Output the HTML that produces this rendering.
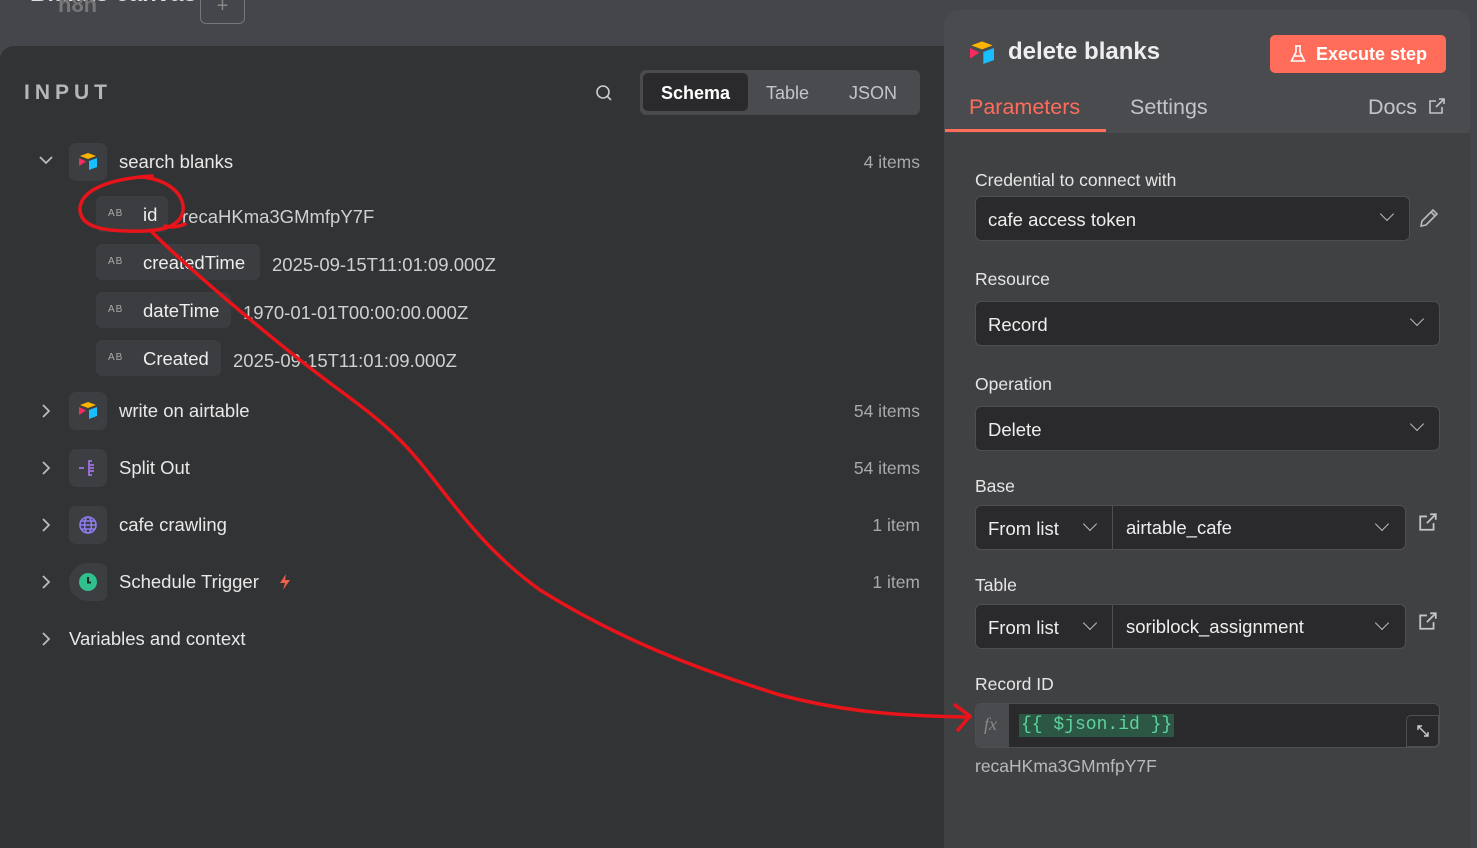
<!DOCTYPE html>
<html><head><meta charset="utf-8"><style>
*{box-sizing:border-box;margin:0;padding:0}
html,body{width:1477px;height:848px;overflow:hidden}
body{background:#45464c;font-family:"Liberation Sans",sans-serif;position:relative;color:#e6e6e6}
.a{position:absolute}
#left{left:0;top:46px;width:960px;height:802px;background:#323335;border-radius:14px 0 0 0}
#right{left:944px;top:10px;width:526px;height:838px;background:#404143;border-radius:14px 14px 0 0}
.ibox{position:absolute;width:38px;height:38px;border-radius:7px;background:#3d3e41}
.chev{position:absolute}
.name{position:absolute;font-size:18.5px;color:#e8e8e8}
.cnt{position:absolute;font-size:17.5px;color:#a8a9ad;text-align:right}
.pill{position:absolute;height:36px;border-radius:6px;background:#3c3d40;font-size:18.5px;color:#eee;padding:8px 10px 0 47px}
.pill i{position:absolute;left:12px;top:12px;font-size:10px;font-style:normal;color:#aaa;letter-spacing:1px}
.val{position:absolute;font-size:18.5px;color:#cfd0d2}
.lbl{position:absolute;left:975px;font-size:17.5px;color:#e6e6e6}
.inp{position:absolute;background:#2a2a2c;border:1px solid #4e4f52;border-radius:6px;height:45px;font-size:18.5px;color:#eee;padding:12px 12px}
.dd{position:absolute;width:10px;height:10px;border-right:1.5px solid #bbb;border-bottom:1.5px solid #bbb;transform:rotate(45deg)}
</style></head><body>
<div class="a" style="left:30px;top:-20px;font-size:24px;font-weight:bold;color:#ddd">Blanks canvas</div>
<div class="a" style="left:58px;top:-8px;font-size:22px;font-weight:bold;color:#777">n8n</div>
<div class="a" style="left:200px;top:-6px;width:45px;height:30px;border:1px solid #777;border-radius:6px;color:#888;text-align:center;font-size:20px">+</div>
<div id="left" class="a"></div>
<div class="a" style="left:24px;top:81px;font-size:21px;font-weight:bold;letter-spacing:5px;color:#b5b6ba">INPUT</div>
<svg class="a" style="left:595px;top:84px" width="18" height="18" viewBox="0 0 18 18"><circle cx="8" cy="8" r="6" fill="none" stroke="#ccc" stroke-width="1.6"/><path d="M12.5 12.5L16 16" stroke="#ccc" stroke-width="1.6"/></svg>
<div class="a" style="left:640px;top:70px;width:280px;height:45px;background:#4a4b4e;border-radius:6px"></div>
<div class="a" style="left:643px;top:73px;width:105px;height:38px;background:#2a2a2c;border-radius:5px;font-size:18px;font-weight:bold;color:#fff;text-align:center;padding-top:10px">Schema</div>
<div class="a" style="left:766px;top:83px;font-size:18px;color:#c4c5c9">Table</div>
<div class="a" style="left:849px;top:83px;font-size:18px;color:#c4c5c9">JSON</div>

<svg class="chev" style="left:38px;top:155px" width="16" height="10" viewBox="0 0 16 10"><path d="M2 2L8 8L14 2" stroke="#bbb" stroke-width="1.8" fill="none"/></svg>
<div class="ibox" style="left:69px;top:143px"></div>
<svg class="a" style="left:78px;top:152px" width="20" height="18" viewBox="0 0 20 18"><path d="M10 1L18 4L10 7L2 4Z" fill="#fcb400"/><path d="M11 9L19 6V15L11 18Z" fill="#18bfff"/><path d="M1 6L8 9.5L1 14Z" fill="#f82b60"/></svg>
<div class="name" style="left:119px;top:151px">search blanks</div>
<div class="cnt" style="top:152px;left:800px;width:120px">4 items</div>

<div class="pill" style="left:96px;top:196px;width:72px">id<i>AB</i></div>
<div class="val" style="left:182px;top:206px">recaHKma3GMmfpY7F</div>
<div class="pill" style="left:96px;top:244px;width:164px">createdTime<i>AB</i></div>
<div class="val" style="left:272px;top:254px">2025-09-15T11:01:09.000Z</div>
<div class="pill" style="left:96px;top:292px;width:135px">dateTime<i>AB</i></div>
<div class="val" style="left:243px;top:302px">1970-01-01T00:00:00.000Z</div>
<div class="pill" style="left:96px;top:340px;width:125px">Created<i>AB</i></div>
<div class="val" style="left:233px;top:350px">2025-09-15T11:01:09.000Z</div>

<svg class="chev" style="left:41px;top:403px" width="10" height="16" viewBox="0 0 10 16"><path d="M2 2L8 8L2 14" stroke="#bbb" stroke-width="1.8" fill="none"/></svg>
<div class="ibox" style="left:69px;top:392px"></div>
<svg class="a" style="left:78px;top:401px" width="20" height="18" viewBox="0 0 20 18"><path d="M10 1L18 4L10 7L2 4Z" fill="#fcb400"/><path d="M11 9L19 6V15L11 18Z" fill="#18bfff"/><path d="M1 6L8 9.5L1 14Z" fill="#f82b60"/></svg>
<div class="name" style="left:119px;top:400px">write on airtable</div>
<div class="cnt" style="top:401px;left:800px;width:120px">54 items</div>

<svg class="chev" style="left:41px;top:460px" width="10" height="16" viewBox="0 0 10 16"><path d="M2 2L8 8L2 14" stroke="#bbb" stroke-width="1.8" fill="none"/></svg>
<div class="ibox" style="left:69px;top:449px"></div>
<svg class="a" style="left:78px;top:458px" width="20" height="20" viewBox="0 0 20 20"><path d="M1 10H6M14 3H11V17H14M11 7H16M11 10H16M11 13H16" stroke="#a070e0" stroke-width="1.8" fill="none"/></svg>
<div class="name" style="left:119px;top:457px">Split Out</div>
<div class="cnt" style="top:458px;left:800px;width:120px">54 items</div>

<svg class="chev" style="left:41px;top:517px" width="10" height="16" viewBox="0 0 10 16"><path d="M2 2L8 8L2 14" stroke="#bbb" stroke-width="1.8" fill="none"/></svg>
<div class="ibox" style="left:69px;top:506px"></div>
<svg class="a" style="left:78px;top:515px" width="20" height="20" viewBox="0 0 20 20"><g fill="none" stroke="#8c7cf0" stroke-width="1.6"><circle cx="10" cy="10" r="8"/><ellipse cx="10" cy="10" rx="3.5" ry="8"/><path d="M2 10H18M3.5 6H16.5M3.5 14H16.5"/></g></svg>
<div class="name" style="left:119px;top:514px">cafe crawling</div>
<div class="cnt" style="top:515px;left:800px;width:120px">1 item</div>

<svg class="chev" style="left:41px;top:574px" width="10" height="16" viewBox="0 0 10 16"><path d="M2 2L8 8L2 14" stroke="#bbb" stroke-width="1.8" fill="none"/></svg>
<div class="ibox" style="left:69px;top:563px;border-radius:19px 7px 7px 19px"></div>
<svg class="a" style="left:78px;top:572px" width="20" height="20" viewBox="0 0 20 20"><circle cx="10" cy="10" r="9" fill="#2fc08e"/><path d="M10 5V10.5H13" stroke="#1d2a25" stroke-width="2" fill="none"/></svg>
<div class="name" style="left:119px;top:571px">Schedule Trigger</div>
<svg class="a" style="left:278px;top:573px" width="14" height="18" viewBox="0 0 14 18"><path d="M8 1L2 10H7L5 17L12 7H7Z" fill="#f0604a"/></svg>
<div class="cnt" style="top:572px;left:800px;width:120px">1 item</div>

<svg class="chev" style="left:41px;top:631px" width="10" height="16" viewBox="0 0 10 16"><path d="M2 2L8 8L2 14" stroke="#bbb" stroke-width="1.8" fill="none"/></svg>
<div class="name" style="left:69px;top:628px">Variables and context</div>

<div id="right" class="a"></div>
<div class="a" style="left:944px;top:10px;width:526px;height:123px;background:#4a4b4e;border-radius:14px 14px 0 0"></div>
<svg class="a" style="left:968px;top:40px" width="28" height="24" viewBox="0 0 20 18"><path d="M10 1L18 4L10 7L2 4Z" fill="#fcb400"/><path d="M11 9L19 6V15L11 18Z" fill="#18bfff"/><path d="M1 6L8 9.5L1 14Z" fill="#f82b60"/></svg>
<div class="a" style="left:1008px;top:38px;font-size:24px;font-weight:bold;color:#eee">delete blanks</div>
<div class="a" style="left:1270px;top:35px;width:176px;height:38px;background:#ff6d5a;border-radius:5px;color:#fff;font-size:18px;font-weight:bold;padding:9px 0 0 46px">Execute step</div>
<svg class="a" style="left:1290px;top:45px" width="16" height="18" viewBox="0 0 16 18"><path d="M5 1H11M6 1V7L1.5 16H14.5L10 7V1M4 11H12" stroke="#fff" stroke-width="1.6" fill="none"/></svg>
<div class="a" style="left:969px;top:95px;font-size:21.5px;color:#ff6d5a">Parameters</div>
<div class="a" style="left:945px;top:129px;width:161px;height:3px;background:#ff6d5a"></div>
<div class="a" style="left:1130px;top:95px;font-size:21.5px;color:#c4c5c9">Settings</div>
<div class="a" style="left:1368px;top:95px;font-size:21.5px;color:#c4c5c9">Docs</div>
<svg class="a" style="left:1428px;top:97px" width="18" height="18" viewBox="0 0 18 18"><path d="M14 10V16H2V4H8M11 2H16V7M16 2L8 10" stroke="#c4c5c9" stroke-width="1.6" fill="none"/></svg>

<div class="lbl" style="top:170px">Credential to connect with</div>
<div class="inp" style="left:975px;top:196px;width:435px">cafe access token</div>
<div class="dd" style="left:1382px;top:209px"></div>
<svg class="a" style="left:1418px;top:207px" width="22" height="22" viewBox="0 0 22 22"><path d="M3 19L4 14L15 3L19 7L8 18Z M13 5L17 9" stroke="#bbb" stroke-width="1.6" fill="none"/></svg>

<div class="lbl" style="top:269px">Resource</div>
<div class="inp" style="left:975px;top:301px;width:465px">Record</div>
<div class="dd" style="left:1412px;top:314px"></div>
<div class="lbl" style="top:374px">Operation</div>
<div class="inp" style="left:975px;top:406px;width:465px">Delete</div>
<div class="dd" style="left:1412px;top:419px"></div>

<div class="lbl" style="top:476px">Base</div>
<div class="inp" style="left:975px;top:505px;width:431px">From list</div>
<div class="a" style="left:1112px;top:506px;width:1px;height:43px;background:#4e4f52"></div>
<div class="a" style="left:1126px;top:517px;font-size:18.5px;color:#eee">airtable_cafe</div>
<div class="dd" style="left:1085px;top:519px"></div>
<div class="dd" style="left:1377px;top:519px"></div>
<svg class="a" style="left:1418px;top:512px" width="20" height="20" viewBox="0 0 18 18"><path d="M14 10V16H2V4H8M11 2H16V7M16 2L8 10" stroke="#c4c5c9" stroke-width="1.6" fill="none"/></svg>

<div class="lbl" style="top:575px">Table</div>
<div class="inp" style="left:975px;top:604px;width:431px">From list</div>
<div class="a" style="left:1112px;top:605px;width:1px;height:43px;background:#4e4f52"></div>
<div class="a" style="left:1126px;top:616px;font-size:18.5px;color:#eee">soriblock_assignment</div>
<div class="dd" style="left:1085px;top:618px"></div>
<div class="dd" style="left:1377px;top:618px"></div>
<svg class="a" style="left:1418px;top:611px" width="20" height="20" viewBox="0 0 18 18"><path d="M14 10V16H2V4H8M11 2H16V7M16 2L8 10" stroke="#c4c5c9" stroke-width="1.6" fill="none"/></svg>

<div class="lbl" style="top:674px">Record ID</div>
<div class="a" style="left:975px;top:703px;width:465px;height:45px;background:#2a2a2c;border:1px solid #4e4f52;border-radius:6px"></div>
<div class="a" style="left:976px;top:704px;width:33px;height:43px;background:#4a4b4e;border-radius:5px 0 0 5px;color:#888;font-family:'Liberation Serif',serif;font-style:italic;font-size:18px;padding:10px 0 0 8px">fx</div>
<div class="a" style="left:1019px;top:714px;background:#2b5744;color:#5fd39e;font-family:'Liberation Mono',monospace;font-size:18px;padding:0 2px;height:23px;line-height:23px">{{ $json.id }}</div>
<div class="a" style="left:1406px;top:715px;width:33px;height:32px;border:1px solid #4e4f52;border-radius:5px 0 5px 0;background:#2a2a2c"></div>
<svg class="a" style="left:1416px;top:724px" width="14" height="14" viewBox="0 0 14 14"><path d="M2 6V2H6M2 2L12 12M12 8V12H8" stroke="#ccc" stroke-width="1.4" fill="none"/></svg>
<div class="a" style="left:975px;top:756px;font-size:17.5px;color:#b8b9bc">recaHKma3GMmfpY7F</div>

<svg class="a" style="left:0;top:0" width="1477" height="848" viewBox="0 0 1477 848">
<g fill="none" stroke="#e8141a" stroke-width="3.5" stroke-linecap="round" stroke-linejoin="round">
<path d="M152,176 C120,178 82,186 80,208 C79,228 105,232 145,231 C170,230 185,222 183,205 C180,188 160,178 140,177 M165,226 C172,228 178,227 185,224"/>
<path d="M150,230 C190,270 250,320 300,360 C340,392 370,410 400,440 C440,480 470,540 540,590 C620,640 700,670 780,695 C830,708 880,716 970,717"/>
<path d="M955,705 L970,716 L958,730"/>
</g></svg>
</body></html>
